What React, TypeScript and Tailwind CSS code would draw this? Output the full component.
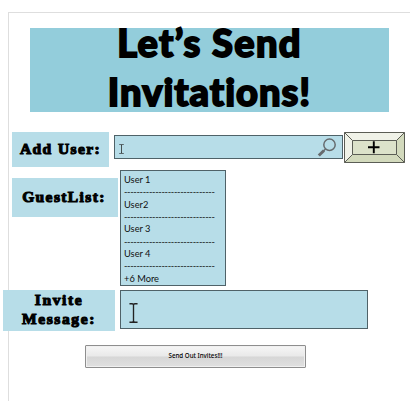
import React from "react";

const GUESTS = ["User 1", "User2", "User 3", "User 4"];
const DASHES = "-".repeat(29);
const LABEL =
  "flex shrink-0 flex-col items-center justify-center bg-[#b7dde8] text-black font-bold font-['Liberation_Serif',serif] text-[15.5px] whitespace-nowrap";
const HEAVY = "[-webkit-text-stroke:1.1px_black]";

function IBeam({ className }: { className: string }) {
  return (
    <svg className={className} viewBox="0 0 10 20" fill="none" stroke="#222" strokeWidth="1.5" preserveAspectRatio="none">
      <path d="M.5.8H3.5Q5 .8 5 2.3Q5 .8 6.5.8H9.5M5 2V18M.5 19.2H3.5Q5 19.2 5 17.7Q5 19.2 6.5 19.2H9.5" />
    </svg>
  );
}

function AddButton() {
  return (
    <button className="h-[31px] w-[61px] shrink-0" aria-label="Add">
      <svg width="61" height="31" viewBox="0 0 61 31">
        <path d="M.5.5H60.5L52.5 8.5H8.5V22.5L.5 30.5Z" fill="#f0f2e8" />
        <path d="M60.5.5V30.5H.5L8.5 22.5H52.5V8.5Z" fill="#d3dabd" />
        <path d="M8.5 8.5H52.5V22.5H8.5Z" fill="#dce2ca" />
        <path
          d="M.5.5H60.5V30.5H.5ZM8.5 8.5H52.5V22.5H8.5ZM.5.5L8.5 8.5M60.5.5L52.5 8.5M60.5 30.5L52.5 22.5M.5 30.5L8.5 22.5"
          fill="none"
          stroke="#5b5d55"
          strokeWidth="1"
        />
        <path d="M24 15.2H35.5M29.8 9.2V21.2" stroke="#000" strokeWidth="1.9" />
      </svg>
    </button>
  );
}

export default function App() {
  return (
    <div className="h-[401px] w-[410px] overflow-hidden bg-white pl-[8px] pt-[12px]">
      <div className="h-[389px] w-[402px] border-l border-t border-[#dedede]">
        <h1 className="ml-[21px] mt-[15px] flex h-[84px] w-[359px] flex-col items-center bg-[#93cddb] font-['Lato',sans-serif] text-[38px] font-black leading-[49px] text-black [-webkit-text-stroke:1.8px_black] [font-variant-ligatures:none]">
          <span className="-mt-[10px] block whitespace-nowrap tracking-[1.3px]">Let’s Send</span>
          <span className="block whitespace-nowrap tracking-[1px]">Invitations!</span>
        </h1>

        <div className="ml-[3px] mt-[20px] flex h-[35px] items-start">
          <div className={`${LABEL} h-[35px] w-[97px] pb-[1px] leading-[18px]`}>
            <span className={`${HEAVY} tracking-[1.4px]`}>Add User:</span>
          </div>
          <div className="ml-[5px] mt-[3px] flex h-[24px] w-[229px] shrink-0 items-center justify-between border border-[#4f6268] bg-[#b7dde8] pl-[4px] pr-[5px]">
            <IBeam className="mt-[3px] h-[10px] w-[5px]" />
            <svg width="20" height="20" viewBox="0 0 20 20" fill="none" stroke="#666b6e">
              <circle cx="12.5" cy="7.7" r="5.7" strokeWidth="1.5" />
              <path d="M8.5 12L6.5 14" strokeWidth="1.5" />
              <path d="M7 13.5L1.8 18.5" strokeWidth="3" />
            </svg>
          </div>
          <div className="ml-[1px]">
            <AddButton />
          </div>
        </div>

        <div className="ml-[3px] mt-[3px] flex h-[116px] items-start">
          <div className={`${LABEL} mt-[8px] h-[39px] w-[106px] pb-[2px] pr-[2px] leading-[18px]`}>
            <span className={`${HEAVY} tracking-[1.4px]`}>GuestList:</span>
          </div>
          <div className="ml-[2px] h-[116px] w-[106px] shrink-0 overflow-hidden border border-[#4f6268] bg-[#b7dde8] pl-[3px] pt-[3px] font-['Lato',sans-serif] text-[9.3px] leading-[12.35px] text-[#111]">
            {GUESTS.map((guest) => (
              <div key={guest}>
                <div>{guest}</div>
                <div className="whitespace-nowrap tracking-[-0.33px]">{DASHES}</div>
              </div>
            ))}
            <div>+6 More</div>
          </div>
        </div>

        <div className="-ml-[6px] mt-[4px] flex h-[41px] items-start">
          <div className={`${LABEL} h-[41px] w-[112px] pb-[3px] leading-[19px]`}>
            <span className={`${HEAVY} tracking-[1.6px]`}>Invite</span>
            <span className={`${HEAVY} tracking-[1.6px]`}>Message:</span>
          </div>
          <div className="ml-[5px] h-[39px] w-[248px] shrink-0 border border-[#4f6268] bg-[#b7dde8] pl-[8px] pt-[12px]">
            <IBeam className="h-[20px] w-[9px]" />
          </div>
        </div>

        <button className="ml-[76px] mt-[14px] flex h-[23px] w-[221px] items-center justify-center rounded-[1px] border border-[#8e8e8e] bg-[linear-gradient(#f6f6f6,#e9e9e9_48%,#d6d6d6_52%,#e0e0e0)] pb-[1px] font-['Noto_Sans',sans-serif] text-[6.2px] font-medium leading-none text-black shadow-[inset_0_0_0_1px_#f0f0f0]">
          Send Out Invites!!!
        </button>
      </div>
    </div>
  );
}
